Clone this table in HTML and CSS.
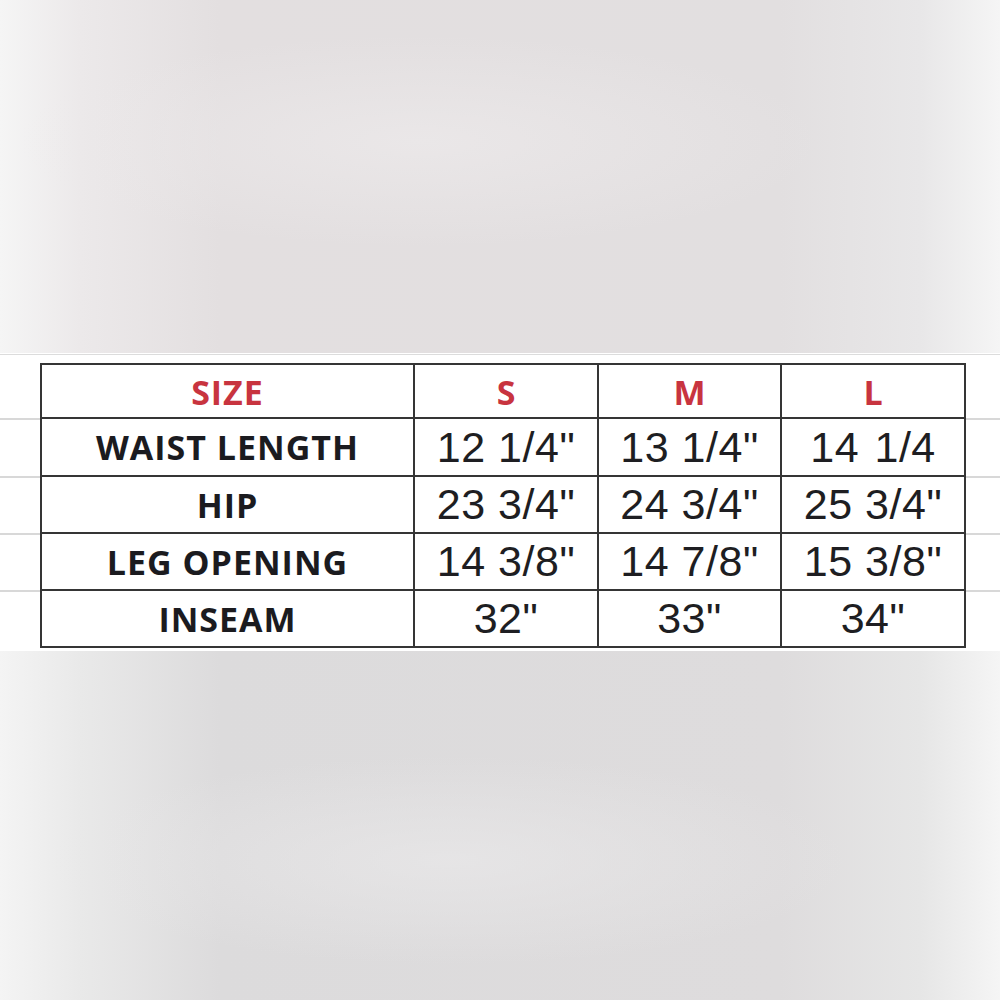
FILE: index.html
```html
<!DOCTYPE html>
<html>
<head>
<meta charset="utf-8">
<link rel="stylesheet" href="styles.css">
</head>
<body>
<div class="page">
  <div class="bg-top"></div>
  <div class="band">
    <table class="chart">
      <colgroup>
        <col class="c-label"><col class="c-s"><col class="c-m"><col class="c-l">
      </colgroup>
      <tr class="head">
        <th class="label red">SIZE</th>
        <th class="red">S</th>
        <th class="red">M</th>
        <th class="red">L</th>
      </tr>
      <tr class="r1">
        <td class="label">WAIST LENGTH</td>
        <td class="num">12 1/4"</td>
        <td class="num">13 1/4"</td>
        <td class="num wide">14 1/4</td>
      </tr>
      <tr class="r2">
        <td class="label">HIP</td>
        <td class="num">23 3/4"</td>
        <td class="num">24 3/4"</td>
        <td class="num">25 3/4"</td>
      </tr>
      <tr class="r3">
        <td class="label">LEG OPENING</td>
        <td class="num">14 3/8"</td>
        <td class="num">14 7/8"</td>
        <td class="num">15 3/8"</td>
      </tr>
      <tr class="r4">
        <td class="label">INSEAM</td>
        <td class="num">32"</td>
        <td class="num">33"</td>
        <td class="num">34"</td>
      </tr>
    </table>
  </div>
  <div class="bg-bottom"></div>
</div>
</body>
</html>
```
FILE: styles.css
```css
html, body {
  margin: 0;
  padding: 0;
}
body {
  width: 1000px;
  height: 1000px;
  overflow: hidden;
  background: #e6e4e5;
}
.page {
  width: 1000px;
  height: 1000px;
  display: flex;
  flex-direction: column;
}
.bg-top {
  height: 353px;
  background:
    radial-gradient(ellipse 40% 30% at 42% 40%, rgba(236,233,234,0.8), rgba(236,233,234,0) 100%),
    linear-gradient(90deg, #f5f5f5 0%, #ece9ea 8%, #e3dfe0 22%, #e2dfe0 78%, #e8e7e8 92%, #f5f5f5 100%);
}
.bg-bottom {
  flex: 1;
  background:
    radial-gradient(ellipse 40% 30% at 45% 60%, rgba(232,231,232,0.8), rgba(232,231,232,0) 100%),
    linear-gradient(90deg, #f4f4f4 0%, #e9e9e9 8%, #dcdbdc 22%, #dedcdd 78%, #e6e6e6 92%, #f5f5f5 100%);
}
.band {
  height: 298px;
  box-sizing: border-box;
  padding: 10px 0 0 40px;
  background:
    linear-gradient(#dcdcdc, #dcdcdc) 0 1px / 100% 1px no-repeat,
    linear-gradient(#d8d8d8, #d8d8d8) 0 65px / 100% 2px no-repeat,
    linear-gradient(#d8d8d8, #d8d8d8) 0 123px / 100% 2px no-repeat,
    linear-gradient(#d8d8d8, #d8d8d8) 0 180px / 100% 2px no-repeat,
    linear-gradient(#d8d8d8, #d8d8d8) 0 237px / 100% 2px no-repeat,
    #ffffff;
}
.chart {
  border-collapse: collapse;
  background: #fff;
  table-layout: fixed;
  width: 924px;
}
.c-label { width: 373px; }
.c-s { width: 184px; }
.c-m { width: 183px; }
.c-l { width: 184px; }
.chart th, .chart td {
  border: 2px solid #353535;
  padding: 0;
  text-align: center;
  vertical-align: middle;
  white-space: pre;
  overflow: hidden;
}
.head { height: 54px; }
.r1 { height: 58px; }
.r2, .r3, .r4 { height: 57px; }
.chart th {
  font-family: "Open Sans", "Liberation Sans", sans-serif;
  font-weight: 700;
  font-size: 34px;
  line-height: 1;
  padding-top: 2px;
}
.label {
  font-family: "Open Sans", "Liberation Sans", sans-serif;
  font-weight: 700;
  font-size: 34px;
  color: #1b1b1f;
  letter-spacing: 1px;
}
.red {
  color: #c8343f;
}
.num {
  font-family: "Liberation Sans", Arial, sans-serif;
  font-size: 43px;
  color: #1e1e22;
  letter-spacing: 0.5px;
  line-height: 1;
}
.wide {
  word-spacing: 3px;
}
```
